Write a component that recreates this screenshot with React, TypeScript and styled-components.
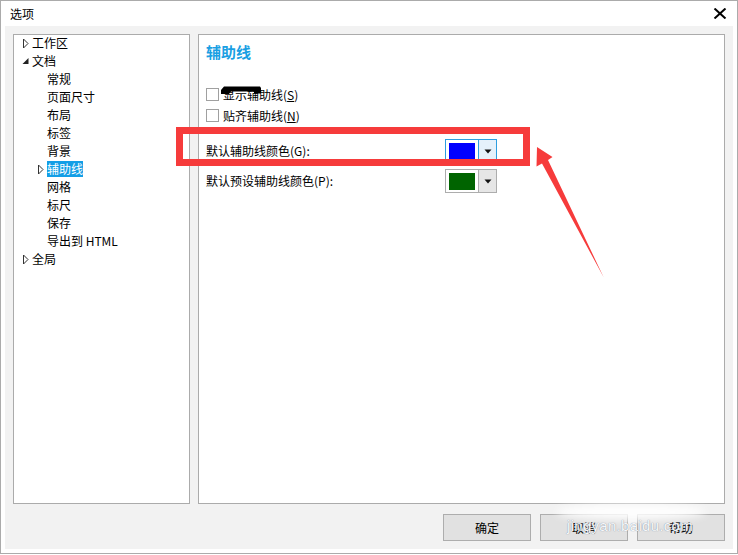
import React from "react";
import styled, { createGlobalStyle } from "styled-components";

const GlobalStyle = createGlobalStyle`
  html, body { margin: 0; padding: 0; background: #fff; }
  body {
    font-family: "Noto Sans CJK SC", "Microsoft YaHei", sans-serif;
    font-size: 12px;
    color: #000;
  }
  * { box-sizing: border-box; }
`;

const Window = styled.div`
  position: relative;
  width: 738px;
  height: 554px;
  border: 1px solid #ababab;
  background: #fff;
  padding: 0 4px 4px 4px;
  display: flex;
  flex-direction: column;
`;

const TitleBar = styled.div`
  height: 25px;
  display: flex;
  align-items: center;
  justify-content: space-between;
  padding: 0 6px 0 5px;
`;

const TitleText = styled.span`
  font-size: 12px;
  line-height: 16px;
  color: #000;
`;

const CloseIcon = styled.svg`
  width: 14px;
  height: 11px;
  display: block;
`;

const Body = styled.div`
  flex: 1;
  background: #f2f2f2;
  padding: 8px;
  display: flex;
  flex-direction: column;
`;

const Panels = styled.div`
  display: flex;
  gap: 8px;
  height: 470px;
`;

const LeftPanel = styled.div`
  width: 177px;
  border: 1px solid #ababab;
  background: #fff;
`;

const TreeList = styled.div`
  margin-top: -1px;
`;

const RightPanel = styled.div`
  flex: 1;
  border: 1px solid #ababab;
  background: #fff;
  padding: 7px 7px;
  display: flex;
  flex-direction: column;
`;

const TreeRow = styled.div<{ $level: number }>`
  display: flex;
  align-items: center;
  height: 18px;
  padding-left: ${(p) => (p.$level === 0 ? 8 : 23)}px;
`;

const Expander = styled.span`
  width: 10px;
  height: 18px;
  display: flex;
  align-items: center;
  flex-shrink: 0;
`;

const TreeLabel = styled.span<{ $selected?: boolean }>`
  line-height: 16px;
  height: 16px;
  white-space: nowrap;
  background: ${(p) => (p.$selected ? "#139ee6" : "transparent")};
  color: ${(p) => (p.$selected ? "#fff" : "#000")};
`;

const SectionTitle = styled.div`
  font-size: 15px;
  font-weight: bold;
  line-height: 20px;
  color: #1a9fe3;
`;

const CheckList = styled.div`
  margin-top: 22px;
  display: flex;
  flex-direction: column;
`;

const CheckRow = styled.label`
  display: flex;
  align-items: center;
  height: 21px;
  gap: 4px;
`;

const CheckBox = styled.span`
  width: 13px;
  height: 13px;
  border: 1px solid #a0a0a0;
  background: #fff;
  display: inline-block;
`;

const ColorList = styled.div`
  margin-top: 13px;
  display: flex;
  flex-direction: column;
  gap: 6px;
`;

const ColorRow = styled.div`
  display: flex;
  align-items: center;
  height: 24px;
`;

const ColorLabel = styled.span`
  width: 239px;
  line-height: 16px;
`;

const Picker = styled.div<{ $active?: boolean }>`
  width: 52px;
  height: 24px;
  display: flex;
  border: 1px solid ${(p) => (p.$active ? "#2d9ee0" : "#adadad")};
  background: #fff;
`;

const SwatchBox = styled.div`
  width: 32px;
  padding: 3px;
`;

const Swatch = styled.div<{ $color: string }>`
  width: 26px;
  height: 17px;
  background: ${(p) => p.$color};
`;

const DropPart = styled.div<{ $active?: boolean }>`
  flex: 1;
  border-left: 1px solid ${(p) => (p.$active ? "#2d9ee0" : "#adadad")};
  background: ${(p) => (p.$active ? "#e5f1fb" : "#e6e6e6")};
  display: flex;
  align-items: center;
  justify-content: center;
`;

const ButtonBar = styled.div`
  display: flex;
  justify-content: flex-end;
  gap: 9px;
  margin-top: 10px;
`;

const Button = styled.button`
  width: 88px;
  height: 27px;
  border: 1px solid #adadad;
  background: #e1e1e1;
  font-family: "Noto Sans CJK SC", "Microsoft YaHei", sans-serif;
  font-size: 12px;
  color: #000;
  padding: 0;
`;

const Overlay = styled.div`
  position: absolute;
  left: -1px;
  top: -1px;
  width: 738px;
  height: 555px;
  pointer-events: none;
`;

const RedBox = styled.div`
  position: absolute;
  left: 176px;
  top: 127px;
  width: 354px;
  height: 39px;
  border: 7px solid #f63b3b;
`;

const FullSvg = styled.svg`
  position: absolute;
  left: 0;
  top: 0;
  width: 738px;
  height: 555px;
`;

const Glow = styled.div`
  position: absolute;
  left: 556px;
  top: 504px;
  width: 150px;
  height: 16px;
  border-radius: 50%;
  background: rgba(255, 255, 255, 0.9);
  filter: blur(4px);
`;

const Watermark = styled.div`
  position: absolute;
  left: 567px;
  top: 517px;
  font-family: "Liberation Sans", Arial, sans-serif;
  font-size: 15px;
  line-height: 18px;
  color: rgba(255, 255, 255, 0.95);
  text-shadow: 0 0 1px rgba(70, 90, 120, 0.75);
  letter-spacing: 0.3px;
`;

const Collapsed = () => (
  <svg width="7" height="11" viewBox="0 0 7 11">
    <path d="M1.5 1 L1.5 10 L6 5.5 Z" fill="#fff" stroke="#333" strokeWidth="1" />
  </svg>
);

const Expanded = () => (
  <svg width="7" height="8" viewBox="0 0 7 8">
    <path d="M6.5 1 L6.5 7 L0.5 7 Z" fill="#222" />
  </svg>
);

type Item = { label: string; level: number; exp?: "c" | "e"; selected?: boolean };

const items: Item[] = [
  { label: "工作区", level: 0, exp: "c" },
  { label: "文档", level: 0, exp: "e" },
  { label: "常规", level: 1 },
  { label: "页面尺寸", level: 1 },
  { label: "布局", level: 1 },
  { label: "标签", level: 1 },
  { label: "背景", level: 1 },
  { label: "辅助线", level: 1, exp: "c", selected: true },
  { label: "网格", level: 1 },
  { label: "标尺", level: 1 },
  { label: "保存", level: 1 },
  { label: "导出到 HTML", level: 1 },
  { label: "全局", level: 0, exp: "c" },
];

const DropArrow = () => (
  <svg width="8" height="5" viewBox="0 0 8 5">
    <path d="M0.5 0.5 L7.5 0.5 L4 4.5 Z" fill="#111" />
  </svg>
);

export default function App() {
  return (
    <>
      <GlobalStyle />
      <Window>
        <TitleBar>
          <TitleText>选项</TitleText>
          <CloseIcon viewBox="0 0 14 11">
            <path d="M1.5 0.5 L12.5 10.5 M12.5 0.5 L1.5 10.5" stroke="#000" strokeWidth="2" />
          </CloseIcon>
        </TitleBar>
        <Body>
          <Panels>
            <LeftPanel>
              <TreeList>
                {items.map((it) => (
                  <TreeRow key={it.label} $level={it.level}>
                    <Expander>
                      {it.exp === "c" && <Collapsed />}
                      {it.exp === "e" && <Expanded />}
                    </Expander>
                    <TreeLabel $selected={it.selected}>{it.label}</TreeLabel>
                  </TreeRow>
                ))}
              </TreeList>
            </LeftPanel>
            <RightPanel>
              <SectionTitle>辅助线</SectionTitle>
              <CheckList>
                <CheckRow>
                  <CheckBox />
                  <span>
                    显示辅助线(<u>S</u>)
                  </span>
                </CheckRow>
                <CheckRow>
                  <CheckBox />
                  <span>
                    贴齐辅助线(<u>N</u>)
                  </span>
                </CheckRow>
              </CheckList>
              <ColorList>
                <ColorRow>
                  <ColorLabel>默认辅助线颜色(G):</ColorLabel>
                  <Picker $active>
                    <SwatchBox>
                      <Swatch $color="#0000ff" />
                    </SwatchBox>
                    <DropPart $active>
                      <DropArrow />
                    </DropPart>
                  </Picker>
                </ColorRow>
                <ColorRow>
                  <ColorLabel>默认预设辅助线颜色(P):</ColorLabel>
                  <Picker>
                    <SwatchBox>
                      <Swatch $color="#006400" />
                    </SwatchBox>
                    <DropPart>
                      <DropArrow />
                    </DropPart>
                  </Picker>
                </ColorRow>
              </ColorList>
            </RightPanel>
          </Panels>
          <ButtonBar>
            <Button>确定</Button>
            <Button>取消</Button>
            <Button>帮助</Button>
          </ButtonBar>
        </Body>
        <Overlay>
          <RedBox />
          <FullSvg viewBox="0 0 738 555">
            <polygon
              points="221,90 224,86.5 260,86.5 261,88 261,93.5 254,93.5 254,91.5 231,91.5 229,94 221,94"
              fill="#000"
            />
            <polygon
              points="537,147 552.5,157 548,160 603.5,277 542,163.5 536.5,166.5"
              fill="#f63b3b"
            />
          </FullSvg>
          <Glow />
          <Watermark>jingyan.baidu.com</Watermark>
        </Overlay>
      </Window>
    </>
  );
}
